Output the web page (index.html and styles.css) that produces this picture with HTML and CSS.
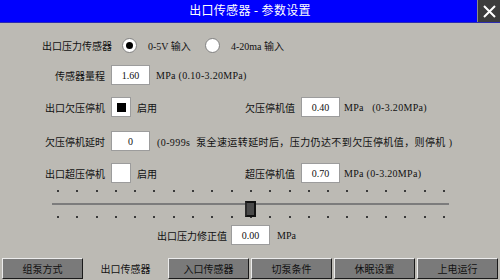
FILE: index.html
```html
<!DOCTYPE html>
<html>
<head>
    <title>出口传感器 - 参数设置</title>
    <link rel="stylesheet" href="styles.css">
</head>
<body>
    <div class="titlebar">
        <span></span>
        <h1 class="title">出口传感器 - 参数设置</h1>
        <div class="close">
            <svg width="13" height="13" viewBox="0 0 13 13">
                <path d="M1 1 L12 12 M12 1 L1 12" stroke="#fff" stroke-width="2" fill="none"/>
            </svg>
        </div>
    </div>

    <div class="form">
        <div class="row row-sensor">
            <span class="label">出口压力传感器</span>
            <div class="option option-first">
                <span class="radio checked"></span>
                <span>0-5V 输入</span>
            </div>
            <div class="option">
                <span class="radio"></span>
                <span>4-20ma 输入</span>
            </div>
        </div>

        <div class="row row-range">
            <span class="label">传感器量程</span>
            <span class="field">1.60</span>
            <span class="unit">MPa (0.10-3.20MPa)</span>
        </div>

        <div class="row row-under">
            <div class="group">
                <span class="label">出口欠压停机</span>
                <span class="check checked"></span>
                <span>启用</span>
            </div>
            <div class="group">
                <span class="label">欠压停机值</span>
                <span class="field">0.40</span>
                <span class="unit">MPa   (0-3.20MPa)</span>
            </div>
        </div>

        <div class="row row-delay">
            <span class="label">欠压停机延时</span>
            <span class="field">0</span>
            <span class="note">(0-999s  泵全速运转延时后，压力仍达不到欠压停机值，则停机 )</span>
        </div>

        <div class="row row-over">
            <div class="group">
                <span class="label">出口超压停机</span>
                <span class="check"></span>
                <span>启用</span>
            </div>
            <div class="group">
                <span class="label">超压停机值</span>
                <span class="field">0.70</span>
                <span class="unit">MPa (0-3.20MPa)</span>
            </div>
        </div>

        <div class="slider">
            <div class="ticks">
                <i></i><i></i><i></i><i></i><i></i><i></i><i></i><i></i><i></i><i></i><i></i>
                <i></i><i></i><i></i><i></i><i></i><i></i><i></i><i></i><i></i><i></i>
            </div>
            <div class="track"></div>
            <div class="ticks ticks-bottom">
                <i></i><i></i><i></i><i></i><i></i><i></i><i></i><i></i><i></i><i></i><i></i>
                <i></i><i></i><i></i><i></i><i></i><i></i><i></i><i></i><i></i><i></i>
            </div>
            <div class="thumb"></div>
        </div>

        <div class="row row-offset">
            <span class="label">出口压力修正值</span>
            <span class="field">0.00</span>
            <span class="unit">MPa</span>
        </div>
    </div>

    <div class="tabs">
        <div class="tab">组泵方式</div>
        <div class="tab active">出口传感器</div>
        <div class="tab">入口传感器</div>
        <div class="tab">切泵条件</div>
        <div class="tab">休眠设置</div>
        <div class="tab">上电运行</div>
    </div>
</body>
</html>
```

FILE: styles.css
```css
body {
    margin: 0;
    width: 500px;
    height: 280px;
    overflow: hidden;
    background-color: #bcbab4;
    font-family: "Liberation Serif", "Noto Sans CJK SC", serif;
    font-size: 10px;
    color: #111;
}
.titlebar {
    display: grid;
    grid-template-columns: 23px 1fr 23px;
    height: 22px;
    background-color: #0000fe;
    border-bottom: 1px solid #2b2bb0;
}
.title {
    margin: 0;
    font-size: 12px;
    font-weight: normal;
    line-height: 22px;
    text-align: center;
    color: #fff;
    letter-spacing: 0.3px;
}
.close {
    display: flex;
    align-items: center;
    justify-content: center;
    background-color: #3c3c3c;
    border-left: 1px solid #8a8a8a;
}
.form {
    padding-top: 11px;
}
.row {
    display: flex;
    align-items: center;
    height: 22px;
    white-space: pre;
}
.row-sensor {
    padding-left: 42px;
    margin-bottom: 8px;
}
.row-range {
    padding-left: 55px;
    margin-bottom: 10px;
    gap: 6px;
}
.row-range .unit {
    letter-spacing: 0.3px;
}
.row-under {
    padding-left: 45px;
    margin-bottom: 12px;
}
.row-delay {
    padding-left: 45px;
    margin-bottom: 10px;
    gap: 6px;
}
.row-over {
    padding-left: 45px;
    margin-bottom: 6px;
}
.row-offset {
    padding-left: 157px;
    gap: 4px;
}
.row-offset .unit {
    margin-left: 3px;
}
.row-delay .note {
    margin-left: 1px;
    letter-spacing: 0.4px;
}
.group {
    display: flex;
    align-items: center;
    gap: 6px;
}
.group:first-child {
    width: 200px;
}
.group .unit {
    margin-left: -2px;
    letter-spacing: 0.3px;
}
.option {
    display: flex;
    align-items: center;
    gap: 11px;
}
.option-first {
    width: 83px;
    margin-left: 10px;
}
.radio {
    display: flex;
    align-items: center;
    justify-content: center;
    box-sizing: border-box;
    width: 15px;
    height: 15px;
    border-radius: 50%;
    background-color: #fff;
    border: 1px solid #808080;
}
.radio.checked::after {
    content: "";
    width: 7px;
    height: 7px;
    border-radius: 50%;
    background-color: #000;
}
.field {
    display: flex;
    align-items: center;
    justify-content: center;
    box-sizing: border-box;
    width: 39px;
    height: 20px;
    background-color: #fff;
    border: 1px solid #9c9c9c;
}
.check {
    display: flex;
    align-items: center;
    justify-content: center;
    box-sizing: border-box;
    width: 20px;
    height: 20px;
    background-color: #fff;
    border: 1px solid #9c9c9c;
}
.check.checked::after {
    content: "";
    width: 9px;
    height: 9px;
    background-color: #000;
}
.slider {
    position: relative;
    height: 34px;
}
.ticks {
    display: flex;
    justify-content: space-between;
    width: 388px;
    height: 2px;
    margin: 6px 0 0 57px;
}
.ticks-bottom {
    margin-top: 11px;
}
.ticks i {
    width: 2px;
    height: 2px;
    background-color: #3a3a3a;
}
.track {
    width: 397px;
    height: 2px;
    margin: 11px 0 0 52px;
    background-color: #7c7c7c;
}
.thumb {
    position: absolute;
    left: 245px;
    top: 11px;
    box-sizing: border-box;
    width: 11px;
    height: 16px;
    background-color: #4a4a4a;
    border: 2px solid #111;
    border-left-color: #2a2a2a;
}
.tabs {
    display: grid;
    grid-template-columns: repeat(6, 1fr);
    gap: 2px;
    height: 21px;
    margin-top: 12px;
    padding: 0 2px;
}
.tab {
    display: flex;
    align-items: center;
    justify-content: center;
    box-sizing: border-box;
    background-color: #7a7a7a;
    border: 1px solid;
    border-color: #ececec #1a1a1a #1a1a1a #ececec;
    color: #111;
}
.tab.active {
    background: none;
    border-color: transparent;
}
```
